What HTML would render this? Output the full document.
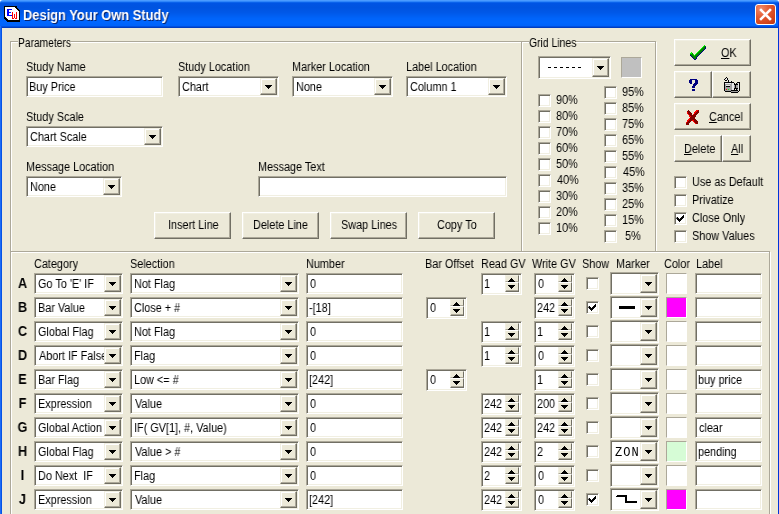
<!DOCTYPE html>
<html><head><meta charset="utf-8"><style>
html,body{margin:0;padding:0;width:779px;height:514px;overflow:hidden;background:#fff;position:relative}
div{position:absolute;box-sizing:border-box}
.t{will-change:transform;font:12px "Liberation Sans",sans-serif;line-height:14px;white-space:pre;color:#000;transform-origin:0 0}
.tt{will-change:transform;font:bold 14px "Liberation Sans",sans-serif;line-height:14px;white-space:pre;color:#fff;text-shadow:1px 1px 0 #0A246A;transform:scaleX(0.92);transform-origin:0 0}
.rl{will-change:transform;font:bold 14px "Liberation Sans",sans-serif;line-height:14px;width:21px;text-align:center;transform:scaleX(0.9)}
.q{font:bold 15px "Liberation Serif",serif;line-height:14px;color:#000080}
.mono{will-change:transform;font:12px "Liberation Mono",monospace;line-height:14px}
.sk{border:1px solid;border-color:#ACA899 #FFFFFF #FFFFFF #ACA899;box-shadow:inset 1px 1px 0 #716F64,inset -1px -1px 0 #F1EFE2}
.rb{background:#ECE9D8;border:1px solid;border-color:#FFFFFF #716F64 #716F64 #FFFFFF;box-shadow:inset -1px -1px 0 #ACA899,inset 1px 1px 0 #F1EFE2}
.sb{background:#ECE9D8;border:1px solid;border-color:#F1EFE2 #716F64 #716F64 #F1EFE2;box-shadow:inset -1px -1px 0 #ACA899,inset 1px 1px 0 #FFFFFF}
.ad{width:7px;height:4px;background:linear-gradient(#000,#000) 0 0/7px 1px no-repeat,linear-gradient(#000,#000) 1px 1px/5px 1px no-repeat,linear-gradient(#000,#000) 2px 2px/3px 1px no-repeat,linear-gradient(#000,#000) 3px 3px/1px 1px no-repeat}
.au{width:7px;height:4px;background:linear-gradient(#000,#000) 0 3px/7px 1px no-repeat,linear-gradient(#000,#000) 1px 2px/5px 1px no-repeat,linear-gradient(#000,#000) 2px 1px/3px 1px no-repeat,linear-gradient(#000,#000) 3px 0/1px 1px no-repeat}
.title{left:0;top:0;width:779px;height:28px;border-radius:3px 3px 0 0;background:linear-gradient(#4A9BFF 0.5px,#2F86FA 1.5px,#0A62EB 2.5px,#0054E3 3.5px,#0053E0 7.5px,#0058E8 12.5px,#0064FA 18.5px,#0066FF 22.5px,#0063FA 25.5px,#0050E0 26.5px,#003DC0 27.5px)}
</style></head><body>
<div class="title"></div>
<div style="left:0;top:28px;width:779px;height:486px;background:#ECE9D8"></div>
<div style="left:0px;top:26px;width:1px;height:488px;background:#1C6BF6"></div>
<div style="left:1px;top:26px;width:1px;height:488px;background:#0553E6"></div>
<div style="left:778px;top:3px;width:1px;height:511px;background:#0035DA"></div>
<div class="tt" style="left:23px;top:8px">Design Your Own Study</div>
<div style="left:755px;top:4px;width:21px;height:21px;box-sizing:border-box;border:1px solid #fff;border-radius:3px;background:radial-gradient(circle at 25% 20%, #F08A6A 0%, #E35B32 40%, #D2431A 75%, #B83310 100%)"></div>
<svg style="position:absolute;left:755px;top:4px" width="21" height="21"><path d="M6 6L15 15M15 6L6 15" stroke="#fff" stroke-width="2.6" stroke-linecap="square"/></svg>
<div style="left:10px;top:41px;width:512px;height:211px;box-sizing:border-box;border:1px solid #FFFFFF;transform:translate(1px,1px)"></div>
<div style="left:10px;top:41px;width:512px;height:211px;box-sizing:border-box;border:1px solid #ACA899"></div>
<div style="left:521px;top:41px;width:135px;height:211px;box-sizing:border-box;border:1px solid #FFFFFF;transform:translate(1px,1px)"></div>
<div style="left:521px;top:41px;width:135px;height:211px;box-sizing:border-box;border:1px solid #ACA899"></div>
<div style="left:10px;top:251px;width:760px;height:299px;box-sizing:border-box;border:1px solid #FFFFFF;transform:translate(1px,1px)"></div>
<div style="left:10px;top:251px;width:760px;height:299px;box-sizing:border-box;border:1px solid #ACA899"></div>
<div style="left:18px;top:38px;width:53px;height:9px;background:#ECE9D8"></div>
<div class="t" style="left:18.06px;top:36px;transform:scaleX(0.8547);">Parameters</div>
<div style="left:529px;top:38px;width:47px;height:9px;background:#ECE9D8"></div>
<div class="t" style="left:529.04px;top:36px;transform:scaleX(0.8665);">Grid Lines</div>
<div class="t" style="left:26.00px;top:60px;transform:scaleX(0.9050);">Study Name</div>
<div class="sk" style="left:26px;top:76px;width:137px;height:21px;background:#FFFFFF"></div>
<div class="t" style="left:29.00px;top:80px;transform:scaleX(0.9050);">Buy Price</div>
<div class="t" style="left:178.00px;top:60px;transform:scaleX(0.9050);">Study Location</div>
<div class="sk" style="left:178px;top:76px;width:101px;height:21px;background:#FFFFFF"></div>
<div class="sb" style="left:260px;top:78px;width:17px;height:17px"></div>
<div class="ad" style="left:265px;top:85px"></div>
<div style="left:180px;top:78px;width:80px;height:17px;overflow:hidden">
<div class="t" style="left:2.00px;top:2px;transform:scaleX(0.9050);">Chart</div>
</div>
<div class="t" style="left:292.00px;top:60px;transform:scaleX(0.9050);">Marker Location</div>
<div class="sk" style="left:292px;top:76px;width:101px;height:21px;background:#FFFFFF"></div>
<div class="sb" style="left:374px;top:78px;width:17px;height:17px"></div>
<div class="ad" style="left:379px;top:85px"></div>
<div style="left:294px;top:78px;width:80px;height:17px;overflow:hidden">
<div class="t" style="left:2.00px;top:2px;transform:scaleX(0.9050);">None</div>
</div>
<div class="t" style="left:406.00px;top:60px;transform:scaleX(0.9050);">Label Location</div>
<div class="sk" style="left:406px;top:76px;width:101px;height:21px;background:#FFFFFF"></div>
<div class="sb" style="left:488px;top:78px;width:17px;height:17px"></div>
<div class="ad" style="left:493px;top:85px"></div>
<div style="left:408px;top:78px;width:80px;height:17px;overflow:hidden">
<div class="t" style="left:2.00px;top:2px;transform:scaleX(0.9050);">Column 1</div>
</div>
<div class="t" style="left:26.00px;top:110px;transform:scaleX(0.9050);">Study Scale</div>
<div class="sk" style="left:26px;top:126px;width:137px;height:21px;background:#FFFFFF"></div>
<div class="sb" style="left:144px;top:128px;width:17px;height:17px"></div>
<div class="ad" style="left:149px;top:135px"></div>
<div style="left:28px;top:128px;width:116px;height:17px;overflow:hidden">
<div class="t" style="left:2.00px;top:2px;transform:scaleX(0.9050);">Chart Scale</div>
</div>
<div class="t" style="left:26.00px;top:160px;transform:scaleX(0.9050);">Message Location</div>
<div class="sk" style="left:26px;top:176px;width:96px;height:21px;background:#FFFFFF"></div>
<div class="sb" style="left:103px;top:178px;width:17px;height:17px"></div>
<div class="ad" style="left:108px;top:185px"></div>
<div style="left:28px;top:178px;width:75px;height:17px;overflow:hidden">
<div class="t" style="left:2.00px;top:2px;transform:scaleX(0.9050);">None</div>
</div>
<div class="t" style="left:258.00px;top:160px;transform:scaleX(0.9050);">Message Text</div>
<div class="sk" style="left:258px;top:176px;width:249px;height:21px;background:#FFFFFF"></div>
<div class="rb" style="left:154px;top:212px;width:77px;height:27px"></div>
<div class="t" style="left:167.50px;top:218px;transform:scaleX(0.9050);">Insert Line</div>
<div class="rb" style="left:242px;top:212px;width:77px;height:27px"></div>
<div class="t" style="left:253.00px;top:218px;transform:scaleX(0.9050);">Delete Line</div>
<div class="rb" style="left:330px;top:212px;width:77px;height:27px"></div>
<div class="t" style="left:340.50px;top:218px;transform:scaleX(0.9050);">Swap Lines</div>
<div class="rb" style="left:418px;top:212px;width:77px;height:27px"></div>
<div class="t" style="left:437.00px;top:218px;transform:scaleX(0.9050);">Copy To</div>
<div class="sk" style="left:538px;top:56px;width:73px;height:23px;background:#FFFFFF"></div>
<div class="sb" style="left:592px;top:58px;width:17px;height:19px"></div>
<div class="ad" style="left:597px;top:66px"></div>
<div style="left:548px;top:67px;width:3px;height:1px;background:#000"></div>
<div style="left:554px;top:67px;width:3px;height:1px;background:#000"></div>
<div style="left:560px;top:67px;width:3px;height:1px;background:#000"></div>
<div style="left:566px;top:67px;width:3px;height:1px;background:#000"></div>
<div style="left:572px;top:67px;width:3px;height:1px;background:#000"></div>
<div style="left:578px;top:67px;width:3px;height:1px;background:#000"></div>
<div style="left:621px;top:57px;width:21px;height:21px;box-sizing:border-box;border:1px solid;border-color:#ACA899 #FFFFFF #FFFFFF #ACA899;background:#C0C0C0"></div>
<div class="sk" style="left:538px;top:94px;width:13px;height:13px;background:#FFFFFF"></div>
<div class="t" style="left:556.00px;top:93px;transform:scaleX(0.9050);">90%</div>
<div class="sk" style="left:538px;top:110px;width:13px;height:13px;background:#FFFFFF"></div>
<div class="t" style="left:556.00px;top:109px;transform:scaleX(0.9050);">80%</div>
<div class="sk" style="left:538px;top:126px;width:13px;height:13px;background:#FFFFFF"></div>
<div class="t" style="left:556.00px;top:125px;transform:scaleX(0.9050);">70%</div>
<div class="sk" style="left:538px;top:142px;width:13px;height:13px;background:#FFFFFF"></div>
<div class="t" style="left:556.00px;top:141px;transform:scaleX(0.9050);">60%</div>
<div class="sk" style="left:538px;top:158px;width:13px;height:13px;background:#FFFFFF"></div>
<div class="t" style="left:556.00px;top:157px;transform:scaleX(0.9050);">50%</div>
<div class="sk" style="left:538px;top:174px;width:13px;height:13px;background:#FFFFFF"></div>
<div class="t" style="left:557.00px;top:173px;transform:scaleX(0.9050);">40%</div>
<div class="sk" style="left:538px;top:190px;width:13px;height:13px;background:#FFFFFF"></div>
<div class="t" style="left:556.00px;top:189px;transform:scaleX(0.9050);">30%</div>
<div class="sk" style="left:538px;top:206px;width:13px;height:13px;background:#FFFFFF"></div>
<div class="t" style="left:556.00px;top:205px;transform:scaleX(0.9050);">20%</div>
<div class="sk" style="left:538px;top:222px;width:13px;height:13px;background:#FFFFFF"></div>
<div class="t" style="left:556.00px;top:221px;transform:scaleX(0.9050);">10%</div>
<div class="sk" style="left:604px;top:86px;width:13px;height:13px;background:#FFFFFF"></div>
<div class="t" style="left:622.00px;top:85px;transform:scaleX(0.9050);">95%</div>
<div class="sk" style="left:604px;top:102px;width:13px;height:13px;background:#FFFFFF"></div>
<div class="t" style="left:622.00px;top:101px;transform:scaleX(0.9050);">85%</div>
<div class="sk" style="left:604px;top:118px;width:13px;height:13px;background:#FFFFFF"></div>
<div class="t" style="left:622.00px;top:117px;transform:scaleX(0.9050);">75%</div>
<div class="sk" style="left:604px;top:134px;width:13px;height:13px;background:#FFFFFF"></div>
<div class="t" style="left:622.00px;top:133px;transform:scaleX(0.9050);">65%</div>
<div class="sk" style="left:604px;top:150px;width:13px;height:13px;background:#FFFFFF"></div>
<div class="t" style="left:622.00px;top:149px;transform:scaleX(0.9050);">55%</div>
<div class="sk" style="left:604px;top:166px;width:13px;height:13px;background:#FFFFFF"></div>
<div class="t" style="left:622.50px;top:165px;transform:scaleX(0.9050);">45%</div>
<div class="sk" style="left:604px;top:182px;width:13px;height:13px;background:#FFFFFF"></div>
<div class="t" style="left:622.00px;top:181px;transform:scaleX(0.9050);">35%</div>
<div class="sk" style="left:604px;top:198px;width:13px;height:13px;background:#FFFFFF"></div>
<div class="t" style="left:622.00px;top:197px;transform:scaleX(0.9050);">25%</div>
<div class="sk" style="left:604px;top:214px;width:13px;height:13px;background:#FFFFFF"></div>
<div class="t" style="left:622.00px;top:213px;transform:scaleX(0.9050);">15%</div>
<div class="sk" style="left:604px;top:230px;width:13px;height:13px;background:#FFFFFF"></div>
<div class="t" style="left:625.00px;top:229px;transform:scaleX(0.9050);">5%</div>
<div class="rb" style="left:674px;top:39px;width:77px;height:27px"></div>
<div class="rb" style="left:674px;top:71px;width:38px;height:27px"></div>
<div class="rb" style="left:712px;top:71px;width:39px;height:27px"></div>
<div class="rb" style="left:674px;top:103px;width:77px;height:27px"></div>
<div class="rb" style="left:674px;top:135px;width:48px;height:27px"></div>
<div class="rb" style="left:722px;top:135px;width:29px;height:27px"></div>
<svg style="position:absolute;left:4px;top:6px" width="16" height="16" shape-rendering="crispEdges"><path d="M0 0h1v1h-1zM1 0h1v1h-1zM2 0h1v1h-1zM3 0h1v1h-1zM4 0h1v1h-1zM5 0h1v1h-1zM6 0h1v1h-1zM7 0h1v1h-1zM8 0h1v1h-1zM9 0h1v1h-1zM10 0h1v1h-1zM11 0h1v1h-1zM12 0h1v1h-1zM0 1h1v1h-1zM11 1h1v1h-1zM12 1h1v1h-1zM0 2h1v1h-1zM12 2h1v1h-1zM13 2h1v1h-1zM0 3h1v1h-1zM13 3h1v1h-1zM14 3h1v1h-1zM0 4h1v1h-1zM14 4h1v1h-1zM15 4h1v1h-1zM0 5h1v1h-1zM15 5h1v1h-1zM0 6h1v1h-1zM15 6h1v1h-1zM0 7h1v1h-1zM15 7h1v1h-1zM0 8h1v1h-1zM15 8h1v1h-1zM0 9h1v1h-1zM15 9h1v1h-1zM0 10h1v1h-1zM15 10h1v1h-1zM0 11h1v1h-1zM1 11h1v1h-1zM15 11h1v1h-1zM0 12h1v1h-1zM1 12h1v1h-1zM2 12h1v1h-1zM15 12h1v1h-1zM1 13h1v1h-1zM2 13h1v1h-1zM3 13h1v1h-1zM15 13h1v1h-1zM2 14h1v1h-1zM3 14h1v1h-1zM4 14h1v1h-1zM5 14h1v1h-1zM6 14h1v1h-1zM7 14h1v1h-1zM8 14h1v1h-1zM9 14h1v1h-1zM10 14h1v1h-1zM11 14h1v1h-1zM12 14h1v1h-1zM13 14h1v1h-1zM14 14h1v1h-1zM15 14h1v1h-1zM3 15h1v1h-1zM4 15h1v1h-1zM5 15h1v1h-1zM6 15h1v1h-1zM7 15h1v1h-1zM8 15h1v1h-1zM9 15h1v1h-1zM10 15h1v1h-1zM11 15h1v1h-1zM12 15h1v1h-1zM13 15h1v1h-1zM14 15h1v1h-1zM15 15h1v1h-1z" fill="#000000"/><path d="M1 1h1v1h-1zM2 1h1v1h-1zM3 1h1v1h-1zM4 1h1v1h-1zM5 1h1v1h-1zM6 1h1v1h-1zM7 1h1v1h-1zM8 1h1v1h-1zM9 1h1v1h-1zM10 1h1v1h-1zM1 2h1v1h-1zM2 2h1v1h-1zM3 2h1v1h-1zM4 2h1v1h-1zM5 2h1v1h-1zM6 2h1v1h-1zM7 2h1v1h-1zM8 2h1v1h-1zM9 2h1v1h-1zM10 2h1v1h-1zM11 2h1v1h-1zM1 3h1v1h-1zM2 3h1v1h-1zM8 3h1v1h-1zM9 3h1v1h-1zM10 3h1v1h-1zM11 3h1v1h-1zM12 3h1v1h-1zM1 4h1v1h-1zM2 4h1v1h-1zM5 4h1v1h-1zM6 4h1v1h-1zM7 4h1v1h-1zM8 4h1v1h-1zM9 4h1v1h-1zM10 4h1v1h-1zM11 4h1v1h-1zM12 4h1v1h-1zM13 4h1v1h-1zM1 5h1v1h-1zM2 5h1v1h-1zM5 5h1v1h-1zM6 5h1v1h-1zM7 5h1v1h-1zM8 5h1v1h-1zM9 5h1v1h-1zM10 5h1v1h-1zM11 5h1v1h-1zM12 5h1v1h-1zM13 5h1v1h-1zM14 5h1v1h-1zM1 6h1v1h-1zM2 6h1v1h-1zM7 6h1v1h-1zM9 6h1v1h-1zM10 6h1v1h-1zM11 6h1v1h-1zM13 6h1v1h-1zM14 6h1v1h-1zM1 7h1v1h-1zM2 7h1v1h-1zM5 7h1v1h-1zM6 7h1v1h-1zM7 7h1v1h-1zM9 7h1v1h-1zM10 7h1v1h-1zM11 7h1v1h-1zM13 7h1v1h-1zM14 7h1v1h-1zM1 8h1v1h-1zM2 8h1v1h-1zM5 8h1v1h-1zM6 8h1v1h-1zM7 8h1v1h-1zM9 8h1v1h-1zM11 8h1v1h-1zM13 8h1v1h-1zM14 8h1v1h-1zM1 9h1v1h-1zM2 9h1v1h-1zM9 9h1v1h-1zM11 9h1v1h-1zM13 9h1v1h-1zM14 9h1v1h-1zM1 10h1v1h-1zM2 10h1v1h-1zM3 10h1v1h-1zM4 10h1v1h-1zM5 10h1v1h-1zM6 10h1v1h-1zM7 10h1v1h-1zM9 10h1v1h-1zM11 10h1v1h-1zM13 10h1v1h-1zM14 10h1v1h-1zM2 11h1v1h-1zM3 11h1v1h-1zM4 11h1v1h-1zM5 11h1v1h-1zM6 11h1v1h-1zM7 11h1v1h-1zM9 11h1v1h-1zM11 11h1v1h-1zM13 11h1v1h-1zM14 11h1v1h-1zM3 12h1v1h-1zM4 12h1v1h-1zM5 12h1v1h-1zM6 12h1v1h-1zM7 12h1v1h-1zM10 12h1v1h-1zM13 12h1v1h-1zM14 12h1v1h-1zM4 13h1v1h-1zM5 13h1v1h-1zM6 13h1v1h-1zM7 13h1v1h-1zM8 13h1v1h-1zM9 13h1v1h-1zM10 13h1v1h-1zM11 13h1v1h-1zM12 13h1v1h-1zM13 13h1v1h-1zM14 13h1v1h-1z" fill="#FFFFFF"/><path d="M3 3h1v1h-1zM4 3h1v1h-1zM5 3h1v1h-1zM6 3h1v1h-1zM7 3h1v1h-1zM3 4h1v1h-1zM4 4h1v1h-1zM3 5h1v1h-1zM4 5h1v1h-1zM3 6h1v1h-1zM4 6h1v1h-1zM5 6h1v1h-1zM6 6h1v1h-1zM3 7h1v1h-1zM4 7h1v1h-1zM3 8h1v1h-1zM4 8h1v1h-1zM3 9h1v1h-1zM4 9h1v1h-1zM5 9h1v1h-1zM6 9h1v1h-1zM7 9h1v1h-1z" fill="#0000FF"/><path d="M8 6h1v1h-1zM12 6h1v1h-1zM8 7h1v1h-1zM12 7h1v1h-1zM8 8h1v1h-1zM10 8h1v1h-1zM12 8h1v1h-1zM8 9h1v1h-1zM10 9h1v1h-1zM12 9h1v1h-1zM8 10h1v1h-1zM10 10h1v1h-1zM12 10h1v1h-1zM8 11h1v1h-1zM10 11h1v1h-1zM12 11h1v1h-1zM8 12h1v1h-1zM9 12h1v1h-1zM11 12h1v1h-1zM12 12h1v1h-1z" fill="#FF0000"/></svg>
<svg style="position:absolute;left:689px;top:45px" width="18" height="15" shape-rendering="crispEdges"><path d="M15 0h1v1h-1zM14 1h1v1h-1zM13 2h1v1h-1zM12 3h1v1h-1zM11 4h1v1h-1zM10 5h1v1h-1zM9 6h1v1h-1zM2 7h1v1h-1zM8 7h1v1h-1zM1 8h1v1h-1zM2 8h1v1h-1zM7 8h1v1h-1zM4 9h1v1h-1zM6 9h1v1h-1zM5 10h1v1h-1z" fill="#00FF00"/><path d="M15 1h1v1h-1zM16 1h1v1h-1zM14 2h1v1h-1zM15 2h1v1h-1zM13 3h1v1h-1zM14 3h1v1h-1zM15 3h1v1h-1zM12 4h1v1h-1zM13 4h1v1h-1zM14 4h1v1h-1zM11 5h1v1h-1zM12 5h1v1h-1zM13 5h1v1h-1zM10 6h1v1h-1zM11 6h1v1h-1zM12 6h1v1h-1zM9 7h1v1h-1zM10 7h1v1h-1zM11 7h1v1h-1zM3 8h1v1h-1zM8 8h1v1h-1zM9 8h1v1h-1zM10 8h1v1h-1zM1 9h1v1h-1zM2 9h1v1h-1zM3 9h1v1h-1zM7 9h1v1h-1zM8 9h1v1h-1zM9 9h1v1h-1zM2 10h1v1h-1zM3 10h1v1h-1zM4 10h1v1h-1zM6 10h1v1h-1zM7 10h1v1h-1zM8 10h1v1h-1zM3 11h1v1h-1zM4 11h1v1h-1zM5 11h1v1h-1zM6 11h1v1h-1zM7 11h1v1h-1zM4 12h1v1h-1zM5 12h1v1h-1zM6 12h1v1h-1zM5 13h1v1h-1zM6 13h1v1h-1z" fill="#008000"/><path d="M16 2h1v1h-1zM16 3h1v1h-1zM15 4h1v1h-1zM14 5h1v1h-1zM13 6h1v1h-1zM12 7h1v1h-1zM11 8h1v1h-1zM10 9h1v1h-1zM1 10h1v1h-1zM9 10h1v1h-1zM2 11h1v1h-1zM8 11h1v1h-1zM3 12h1v1h-1zM7 12h1v1h-1zM4 13h1v1h-1zM7 13h1v1h-1zM5 14h1v1h-1zM6 14h1v1h-1z" fill="#000080"/></svg>
<div class="t" style="left:721.00px;top:46px;transform:scaleX(0.9050);"><u>O</u>K</div>
<svg style="position:absolute;left:689px;top:79px" width="9" height="12" shape-rendering="crispEdges"><path d="M1 0h1v1h-1zM2 0h1v1h-1zM3 0h1v1h-1zM4 0h1v1h-1zM5 0h1v1h-1zM6 0h1v1h-1zM7 0h1v1h-1zM0 1h1v1h-1zM1 1h1v1h-1zM2 1h1v1h-1zM6 1h1v1h-1zM7 1h1v1h-1zM8 1h1v1h-1zM0 2h1v1h-1zM1 2h1v1h-1zM2 2h1v1h-1zM6 2h1v1h-1zM7 2h1v1h-1zM8 2h1v1h-1zM0 3h1v1h-1zM1 3h1v1h-1zM2 3h1v1h-1zM6 3h1v1h-1zM7 3h1v1h-1zM8 3h1v1h-1zM1 4h1v1h-1zM2 4h1v1h-1zM5 4h1v1h-1zM6 4h1v1h-1zM7 4h1v1h-1zM8 4h1v1h-1zM4 5h1v1h-1zM5 5h1v1h-1zM6 5h1v1h-1zM7 5h1v1h-1zM4 6h1v1h-1zM5 6h1v1h-1zM6 6h1v1h-1zM3 7h1v1h-1zM4 7h1v1h-1zM5 7h1v1h-1zM3 8h1v1h-1zM4 8h1v1h-1zM5 8h1v1h-1zM3 10h1v1h-1zM4 10h1v1h-1zM5 10h1v1h-1zM3 11h1v1h-1zM4 11h1v1h-1zM5 11h1v1h-1z" fill="#000080"/></svg>
<svg style="position:absolute;left:723px;top:76px" width="17" height="17" shape-rendering="crispEdges"><path d="M3 1h1v1h-1zM2 2h1v1h-1zM4 2h1v1h-1zM1 3h1v1h-1zM4 3h1v1h-1zM2 4h1v1h-1zM3 4h1v1h-1zM5 4h1v1h-1zM5 5h1v1h-1zM8 5h1v1h-1zM1 6h1v1h-1zM2 6h1v1h-1zM3 6h1v1h-1zM4 6h1v1h-1zM5 6h1v1h-1zM6 6h1v1h-1zM7 6h1v1h-1zM8 6h1v1h-1zM9 6h1v1h-1zM10 6h1v1h-1zM14 6h1v1h-1zM15 6h1v1h-1zM16 6h1v1h-1zM1 7h1v1h-1zM11 7h1v1h-1zM13 7h1v1h-1zM16 7h1v1h-1zM1 8h1v1h-1zM11 8h1v1h-1zM12 8h1v1h-1zM13 8h1v1h-1zM14 8h1v1h-1zM16 8h1v1h-1zM1 9h1v1h-1zM12 9h1v1h-1zM16 9h1v1h-1zM1 10h1v1h-1zM3 10h1v1h-1zM4 10h1v1h-1zM5 10h1v1h-1zM6 10h1v1h-1zM12 10h1v1h-1zM16 10h1v1h-1zM1 11h1v1h-1zM12 11h1v1h-1zM16 11h1v1h-1zM1 12h1v1h-1zM11 12h1v1h-1zM12 12h1v1h-1zM13 12h1v1h-1zM14 12h1v1h-1zM16 12h1v1h-1zM1 13h1v1h-1zM11 13h1v1h-1zM13 13h1v1h-1zM16 13h1v1h-1zM1 14h1v1h-1zM8 14h1v1h-1zM9 14h1v1h-1zM10 14h1v1h-1zM11 14h1v1h-1zM12 14h1v1h-1zM13 14h1v1h-1zM14 14h1v1h-1zM16 14h1v1h-1zM2 15h1v1h-1zM3 15h1v1h-1zM4 15h1v1h-1zM5 15h1v1h-1zM6 15h1v1h-1zM7 15h1v1h-1zM15 15h1v1h-1zM8 16h1v1h-1zM9 16h1v1h-1zM10 16h1v1h-1zM11 16h1v1h-1zM12 16h1v1h-1zM13 16h1v1h-1zM14 16h1v1h-1z" fill="#000000"/><path d="M3 2h1v1h-1zM2 3h1v1h-1zM3 3h1v1h-1zM5 3h1v1h-1zM6 4h1v1h-1zM6 5h1v1h-1zM7 5h1v1h-1zM2 7h1v1h-1zM3 7h1v1h-1zM4 7h1v1h-1zM5 7h1v1h-1zM6 7h1v1h-1zM7 7h1v1h-1zM9 7h1v1h-1zM10 7h1v1h-1zM15 7h1v1h-1zM9 8h1v1h-1zM10 8h1v1h-1zM15 8h1v1h-1zM3 9h1v1h-1zM4 9h1v1h-1zM5 9h1v1h-1zM6 9h1v1h-1zM9 9h1v1h-1zM10 9h1v1h-1zM15 9h1v1h-1zM9 10h1v1h-1zM10 10h1v1h-1zM15 10h1v1h-1zM9 11h1v1h-1zM10 11h1v1h-1zM15 11h1v1h-1zM9 12h1v1h-1zM10 12h1v1h-1zM15 12h1v1h-1zM9 13h1v1h-1zM10 13h1v1h-1zM15 13h1v1h-1z" fill="#E8E8E8"/><path d="M8 7h1v1h-1zM14 7h1v1h-1zM2 8h1v1h-1zM3 8h1v1h-1zM4 8h1v1h-1zM5 8h1v1h-1zM6 8h1v1h-1zM7 8h1v1h-1zM8 8h1v1h-1zM2 9h1v1h-1zM7 9h1v1h-1zM8 9h1v1h-1zM11 9h1v1h-1zM13 9h1v1h-1zM14 9h1v1h-1zM2 10h1v1h-1zM7 10h1v1h-1zM8 10h1v1h-1zM11 10h1v1h-1zM13 10h1v1h-1zM14 10h1v1h-1zM2 11h1v1h-1zM3 11h1v1h-1zM4 11h1v1h-1zM5 11h1v1h-1zM6 11h1v1h-1zM7 11h1v1h-1zM8 11h1v1h-1zM11 11h1v1h-1zM13 11h1v1h-1zM14 11h1v1h-1zM2 12h1v1h-1zM3 12h1v1h-1zM4 12h1v1h-1zM5 12h1v1h-1zM6 12h1v1h-1zM7 12h1v1h-1zM8 12h1v1h-1zM2 13h1v1h-1zM4 13h1v1h-1zM6 13h1v1h-1zM7 13h1v1h-1zM8 13h1v1h-1zM14 13h1v1h-1zM2 14h1v1h-1zM3 14h1v1h-1zM4 14h1v1h-1zM5 14h1v1h-1zM6 14h1v1h-1zM7 14h1v1h-1zM8 15h1v1h-1zM9 15h1v1h-1zM10 15h1v1h-1zM11 15h1v1h-1zM12 15h1v1h-1zM13 15h1v1h-1zM14 15h1v1h-1z" fill="#A0A0A0"/><path d="M3 13h1v1h-1z" fill="#FF0000"/><path d="M5 13h1v1h-1z" fill="#00FF00"/></svg>
<svg style="position:absolute;left:684px;top:108px" width="18" height="18" shape-rendering="crispEdges"><path d="M4 2h1v1h-1zM14 2h1v1h-1zM3 3h1v1h-1zM4 3h1v1h-1zM5 3h1v1h-1zM13 3h1v1h-1zM14 3h1v1h-1zM4 4h1v1h-1zM5 4h1v1h-1zM6 4h1v1h-1zM12 4h1v1h-1zM13 4h1v1h-1zM14 4h1v1h-1zM4 5h1v1h-1zM5 5h1v1h-1zM6 5h1v1h-1zM7 5h1v1h-1zM11 5h1v1h-1zM12 5h1v1h-1zM13 5h1v1h-1zM5 6h1v1h-1zM6 6h1v1h-1zM7 6h1v1h-1zM10 6h1v1h-1zM11 6h1v1h-1zM12 6h1v1h-1zM6 7h1v1h-1zM7 7h1v1h-1zM8 7h1v1h-1zM9 7h1v1h-1zM10 7h1v1h-1zM11 7h1v1h-1zM7 8h1v1h-1zM8 8h1v1h-1zM9 8h1v1h-1zM10 8h1v1h-1zM11 8h1v1h-1zM6 9h1v1h-1zM7 9h1v1h-1zM8 9h1v1h-1zM9 9h1v1h-1zM10 9h1v1h-1zM6 10h1v1h-1zM7 10h1v1h-1zM8 10h1v1h-1zM9 10h1v1h-1zM10 10h1v1h-1zM6 11h1v1h-1zM7 11h1v1h-1zM8 11h1v1h-1zM9 11h1v1h-1zM10 11h1v1h-1zM11 11h1v1h-1zM5 12h1v1h-1zM6 12h1v1h-1zM7 12h1v1h-1zM10 12h1v1h-1zM11 12h1v1h-1zM12 12h1v1h-1zM4 13h1v1h-1zM5 13h1v1h-1zM6 13h1v1h-1zM10 13h1v1h-1zM11 13h1v1h-1zM12 13h1v1h-1zM13 13h1v1h-1zM3 14h1v1h-1zM4 14h1v1h-1zM5 14h1v1h-1zM11 14h1v1h-1zM12 14h1v1h-1zM13 14h1v1h-1zM2 15h1v1h-1zM3 15h1v1h-1zM4 15h1v1h-1zM12 15h1v1h-1zM13 15h1v1h-1zM2 16h1v1h-1zM3 16h1v1h-1zM4 16h1v1h-1z" fill="#800000"/><path d="M12 2h1v1h-1zM13 2h1v1h-1zM11 3h1v1h-1zM12 3h1v1h-1zM3 4h1v1h-1zM10 4h1v1h-1zM11 4h1v1h-1zM3 5h1v1h-1zM10 5h1v1h-1zM4 6h1v1h-1zM9 6h1v1h-1zM5 7h1v1h-1zM5 8h1v1h-1zM6 8h1v1h-1zM5 10h1v1h-1zM4 11h1v1h-1zM5 11h1v1h-1zM3 12h1v1h-1zM4 12h1v1h-1zM8 12h1v1h-1zM9 12h1v1h-1zM3 13h1v1h-1zM9 13h1v1h-1zM2 14h1v1h-1zM10 14h1v1h-1zM11 15h1v1h-1z" fill="#FF0000"/></svg>
<div class="t" style="left:709.00px;top:110px;transform:scaleX(0.9050);"><u>C</u>ancel</div>
<div class="t" style="left:684.00px;top:142px;transform:scaleX(0.9050);"><u>D</u>elete</div>
<div class="t" style="left:731.00px;top:142px;transform:scaleX(0.9050);"><u>A</u>ll</div>
<div class="sk" style="left:674px;top:176px;width:13px;height:13px;background:#FFFFFF"></div>
<div class="t" style="left:692.00px;top:175px;transform:scaleX(0.9050);">Use as Default</div>
<div class="sk" style="left:674px;top:194px;width:13px;height:13px;background:#FFFFFF"></div>
<div class="t" style="left:692.00px;top:193px;transform:scaleX(0.9050);">Privatize</div>
<div class="sk" style="left:674px;top:212px;width:13px;height:13px;background:#FFFFFF"></div>
<svg style="position:absolute;left:674px;top:212px" width="13" height="13"><path d="M3 5h1v1h1v1h1v-1h1v-1h1v-1h1v-1h1v3h-1v1h-1v1h-1v1h-1v1h-1v-1h-1v-1h-1v-1h-1z" fill="#000"/></svg>
<div class="t" style="left:692.00px;top:211px;transform:scaleX(0.9050);">Close Only</div>
<div class="sk" style="left:674px;top:230px;width:13px;height:13px;background:#FFFFFF"></div>
<div class="t" style="left:692.00px;top:229px;transform:scaleX(0.9050);">Show Values</div>
<div class="t" style="left:34.00px;top:257px;transform:scaleX(0.9050);">Category</div>
<div class="t" style="left:130.00px;top:257px;transform:scaleX(0.9050);">Selection</div>
<div class="t" style="left:306.00px;top:257px;transform:scaleX(0.9050);">Number</div>
<div class="t" style="left:425.00px;top:257px;transform:scaleX(0.9050);">Bar Offset</div>
<div class="t" style="left:481.00px;top:257px;transform:scaleX(0.9050);">Read GV</div>
<div class="t" style="left:532.00px;top:257px;transform:scaleX(0.9050);">Write GV</div>
<div class="t" style="left:582.00px;top:257px;transform:scaleX(0.9050);">Show</div>
<div class="t" style="left:616.00px;top:257px;transform:scaleX(0.9050);">Marker</div>
<div class="t" style="left:664.00px;top:257px;transform:scaleX(0.9050);">Color</div>
<div class="t" style="left:696.00px;top:257px;transform:scaleX(0.9050);">Label</div>
<div class="rl" style="left:12px;top:276px">A</div>
<div class="sk" style="left:34px;top:273px;width:89px;height:21px;background:#FFFFFF"></div>
<div class="sb" style="left:104px;top:275px;width:17px;height:17px"></div>
<div class="ad" style="left:109px;top:282px"></div>
<div style="left:36px;top:275px;width:68px;height:17px;overflow:hidden">
<div class="t" style="left:2.00px;top:2px;transform:scaleX(0.9050);">Go To 'E' IF</div>
</div>
<div class="sk" style="left:130px;top:273px;width:169px;height:21px;background:#FFFFFF"></div>
<div class="sb" style="left:280px;top:275px;width:17px;height:17px"></div>
<div class="ad" style="left:285px;top:282px"></div>
<div style="left:132px;top:275px;width:148px;height:17px;overflow:hidden">
<div class="t" style="left:2.00px;top:2px;transform:scaleX(0.9050);">Not Flag</div>
</div>
<div class="sk" style="left:306px;top:273px;width:97px;height:21px;background:#FFFFFF"></div>
<div class="t" style="left:310.00px;top:277px;transform:scaleX(0.9050);">0</div>
<div class="sk" style="left:481px;top:273px;width:41px;height:22px;background:#FFFFFF"></div>
<div style="left:505px;top:275px;width:14px;height:7px;background:#ECE9D8;box-sizing:border-box;border-style:solid;border-width:1px 1px 1px 1px;border-color:#F1EFE2 #716F64 #ACA899 #F1EFE2;"></div>
<div style="left:505px;top:282px;width:14px;height:10px;background:#ECE9D8;box-sizing:border-box;border-style:solid;border-width:1px 1px 1px 1px;border-color:#FFFFFF #716F64 #716F64 #F1EFE2;box-shadow:inset 0 -1px 0 #ACA899"></div>
<div class="au" style="left:508px;top:278px"></div>
<div class="ad" style="left:508px;top:285px"></div>
<div class="t" style="left:484.00px;top:277px;transform:scaleX(0.9050);">1</div>
<div class="sk" style="left:534px;top:273px;width:41px;height:22px;background:#FFFFFF"></div>
<div style="left:558px;top:275px;width:14px;height:7px;background:#ECE9D8;box-sizing:border-box;border-style:solid;border-width:1px 1px 1px 1px;border-color:#F1EFE2 #716F64 #ACA899 #F1EFE2;"></div>
<div style="left:558px;top:282px;width:14px;height:10px;background:#ECE9D8;box-sizing:border-box;border-style:solid;border-width:1px 1px 1px 1px;border-color:#FFFFFF #716F64 #716F64 #F1EFE2;box-shadow:inset 0 -1px 0 #ACA899"></div>
<div class="au" style="left:561px;top:278px"></div>
<div class="ad" style="left:561px;top:285px"></div>
<div class="t" style="left:538.00px;top:277px;transform:scaleX(0.9050);">0</div>
<div class="sk" style="left:586px;top:277px;width:13px;height:13px;background:#FFFFFF"></div>
<div class="sk" style="left:610px;top:272px;width:49px;height:23px;background:#FFFFFF"></div>
<div class="sb" style="left:640px;top:274px;width:17px;height:19px"></div>
<div class="ad" style="left:645px;top:282px"></div>
<div style="left:666px;top:273px;width:21px;height:21px;box-sizing:border-box;border:1px solid;border-color:#ACA899 #FFFFFF #FFFFFF #ACA899;background:#fff"></div>
<div class="sk" style="left:695px;top:273px;width:67px;height:21px;background:#FFFFFF"></div>
<div class="rl" style="left:12px;top:300px">B</div>
<div class="sk" style="left:34px;top:297px;width:89px;height:21px;background:#FFFFFF"></div>
<div class="sb" style="left:104px;top:299px;width:17px;height:17px"></div>
<div class="ad" style="left:109px;top:306px"></div>
<div style="left:36px;top:299px;width:68px;height:17px;overflow:hidden">
<div class="t" style="left:2.00px;top:2px;transform:scaleX(0.9050);">Bar Value</div>
</div>
<div class="sk" style="left:130px;top:297px;width:169px;height:21px;background:#FFFFFF"></div>
<div class="sb" style="left:280px;top:299px;width:17px;height:17px"></div>
<div class="ad" style="left:285px;top:306px"></div>
<div style="left:132px;top:299px;width:148px;height:17px;overflow:hidden">
<div class="t" style="left:2.00px;top:2px;transform:scaleX(0.9050);">Close + #</div>
</div>
<div class="sk" style="left:306px;top:297px;width:97px;height:21px;background:#FFFFFF"></div>
<div class="t" style="left:309.00px;top:301px;transform:scaleX(0.9050);">-[18]</div>
<div class="sk" style="left:426px;top:297px;width:41px;height:22px;background:#FFFFFF"></div>
<div style="left:450px;top:299px;width:14px;height:7px;background:#ECE9D8;box-sizing:border-box;border-style:solid;border-width:1px 1px 1px 1px;border-color:#F1EFE2 #716F64 #ACA899 #F1EFE2;"></div>
<div style="left:450px;top:306px;width:14px;height:10px;background:#ECE9D8;box-sizing:border-box;border-style:solid;border-width:1px 1px 1px 1px;border-color:#FFFFFF #716F64 #716F64 #F1EFE2;box-shadow:inset 0 -1px 0 #ACA899"></div>
<div class="au" style="left:453px;top:302px"></div>
<div class="ad" style="left:453px;top:309px"></div>
<div class="t" style="left:430.00px;top:301px;transform:scaleX(0.9050);">0</div>
<div class="sk" style="left:534px;top:297px;width:41px;height:22px;background:#FFFFFF"></div>
<div style="left:558px;top:299px;width:14px;height:7px;background:#ECE9D8;box-sizing:border-box;border-style:solid;border-width:1px 1px 1px 1px;border-color:#F1EFE2 #716F64 #ACA899 #F1EFE2;"></div>
<div style="left:558px;top:306px;width:14px;height:10px;background:#ECE9D8;box-sizing:border-box;border-style:solid;border-width:1px 1px 1px 1px;border-color:#FFFFFF #716F64 #716F64 #F1EFE2;box-shadow:inset 0 -1px 0 #ACA899"></div>
<div class="au" style="left:561px;top:302px"></div>
<div class="ad" style="left:561px;top:309px"></div>
<div class="t" style="left:537.00px;top:301px;transform:scaleX(0.9050);">242</div>
<div class="sk" style="left:586px;top:301px;width:13px;height:13px;background:#FFFFFF"></div>
<svg style="position:absolute;left:586px;top:301px" width="13" height="13"><path d="M3 5h1v1h1v1h1v-1h1v-1h1v-1h1v-1h1v3h-1v1h-1v1h-1v1h-1v1h-1v-1h-1v-1h-1v-1h-1z" fill="#000"/></svg>
<div class="sk" style="left:610px;top:296px;width:49px;height:23px;background:#FFFFFF"></div>
<div class="sb" style="left:640px;top:298px;width:17px;height:19px"></div>
<div class="ad" style="left:645px;top:306px"></div>
<div style="left:619px;top:306px;width:16px;height:3px;background:#000"></div>
<div style="left:666px;top:297px;width:21px;height:21px;box-sizing:border-box;border:1px solid;border-color:#ACA899 #FFFFFF #FFFFFF #ACA899;background:#FF00FF"></div>
<div class="sk" style="left:695px;top:297px;width:67px;height:21px;background:#FFFFFF"></div>
<div class="rl" style="left:12px;top:324px">C</div>
<div class="sk" style="left:34px;top:321px;width:89px;height:21px;background:#FFFFFF"></div>
<div class="sb" style="left:104px;top:323px;width:17px;height:17px"></div>
<div class="ad" style="left:109px;top:330px"></div>
<div style="left:36px;top:323px;width:68px;height:17px;overflow:hidden">
<div class="t" style="left:2.00px;top:2px;transform:scaleX(0.9050);">Global Flag</div>
</div>
<div class="sk" style="left:130px;top:321px;width:169px;height:21px;background:#FFFFFF"></div>
<div class="sb" style="left:280px;top:323px;width:17px;height:17px"></div>
<div class="ad" style="left:285px;top:330px"></div>
<div style="left:132px;top:323px;width:148px;height:17px;overflow:hidden">
<div class="t" style="left:2.00px;top:2px;transform:scaleX(0.9050);">Not Flag</div>
</div>
<div class="sk" style="left:306px;top:321px;width:97px;height:21px;background:#FFFFFF"></div>
<div class="t" style="left:310.00px;top:325px;transform:scaleX(0.9050);">0</div>
<div class="sk" style="left:481px;top:321px;width:41px;height:22px;background:#FFFFFF"></div>
<div style="left:505px;top:323px;width:14px;height:7px;background:#ECE9D8;box-sizing:border-box;border-style:solid;border-width:1px 1px 1px 1px;border-color:#F1EFE2 #716F64 #ACA899 #F1EFE2;"></div>
<div style="left:505px;top:330px;width:14px;height:10px;background:#ECE9D8;box-sizing:border-box;border-style:solid;border-width:1px 1px 1px 1px;border-color:#FFFFFF #716F64 #716F64 #F1EFE2;box-shadow:inset 0 -1px 0 #ACA899"></div>
<div class="au" style="left:508px;top:326px"></div>
<div class="ad" style="left:508px;top:333px"></div>
<div class="t" style="left:484.00px;top:325px;transform:scaleX(0.9050);">1</div>
<div class="sk" style="left:534px;top:321px;width:41px;height:22px;background:#FFFFFF"></div>
<div style="left:558px;top:323px;width:14px;height:7px;background:#ECE9D8;box-sizing:border-box;border-style:solid;border-width:1px 1px 1px 1px;border-color:#F1EFE2 #716F64 #ACA899 #F1EFE2;"></div>
<div style="left:558px;top:330px;width:14px;height:10px;background:#ECE9D8;box-sizing:border-box;border-style:solid;border-width:1px 1px 1px 1px;border-color:#FFFFFF #716F64 #716F64 #F1EFE2;box-shadow:inset 0 -1px 0 #ACA899"></div>
<div class="au" style="left:561px;top:326px"></div>
<div class="ad" style="left:561px;top:333px"></div>
<div class="t" style="left:537.00px;top:325px;transform:scaleX(0.9050);">1</div>
<div class="sk" style="left:586px;top:325px;width:13px;height:13px;background:#FFFFFF"></div>
<div class="sk" style="left:610px;top:320px;width:49px;height:23px;background:#FFFFFF"></div>
<div class="sb" style="left:640px;top:322px;width:17px;height:19px"></div>
<div class="ad" style="left:645px;top:330px"></div>
<div style="left:666px;top:321px;width:21px;height:21px;box-sizing:border-box;border:1px solid;border-color:#ACA899 #FFFFFF #FFFFFF #ACA899;background:#fff"></div>
<div class="sk" style="left:695px;top:321px;width:67px;height:21px;background:#FFFFFF"></div>
<div class="rl" style="left:12px;top:348px">D</div>
<div class="sk" style="left:34px;top:345px;width:89px;height:21px;background:#FFFFFF"></div>
<div class="sb" style="left:104px;top:347px;width:17px;height:17px"></div>
<div class="ad" style="left:109px;top:354px"></div>
<div style="left:36px;top:347px;width:68px;height:17px;overflow:hidden">
<div class="t" style="left:3.00px;top:2px;transform:scaleX(0.9050);">Abort IF False</div>
</div>
<div class="sk" style="left:130px;top:345px;width:169px;height:21px;background:#FFFFFF"></div>
<div class="sb" style="left:280px;top:347px;width:17px;height:17px"></div>
<div class="ad" style="left:285px;top:354px"></div>
<div style="left:132px;top:347px;width:148px;height:17px;overflow:hidden">
<div class="t" style="left:2.00px;top:2px;transform:scaleX(0.9050);">Flag</div>
</div>
<div class="sk" style="left:306px;top:345px;width:97px;height:21px;background:#FFFFFF"></div>
<div class="t" style="left:310.00px;top:349px;transform:scaleX(0.9050);">0</div>
<div class="sk" style="left:481px;top:345px;width:41px;height:22px;background:#FFFFFF"></div>
<div style="left:505px;top:347px;width:14px;height:7px;background:#ECE9D8;box-sizing:border-box;border-style:solid;border-width:1px 1px 1px 1px;border-color:#F1EFE2 #716F64 #ACA899 #F1EFE2;"></div>
<div style="left:505px;top:354px;width:14px;height:10px;background:#ECE9D8;box-sizing:border-box;border-style:solid;border-width:1px 1px 1px 1px;border-color:#FFFFFF #716F64 #716F64 #F1EFE2;box-shadow:inset 0 -1px 0 #ACA899"></div>
<div class="au" style="left:508px;top:350px"></div>
<div class="ad" style="left:508px;top:357px"></div>
<div class="t" style="left:484.00px;top:349px;transform:scaleX(0.9050);">1</div>
<div class="sk" style="left:534px;top:345px;width:41px;height:22px;background:#FFFFFF"></div>
<div style="left:558px;top:347px;width:14px;height:7px;background:#ECE9D8;box-sizing:border-box;border-style:solid;border-width:1px 1px 1px 1px;border-color:#F1EFE2 #716F64 #ACA899 #F1EFE2;"></div>
<div style="left:558px;top:354px;width:14px;height:10px;background:#ECE9D8;box-sizing:border-box;border-style:solid;border-width:1px 1px 1px 1px;border-color:#FFFFFF #716F64 #716F64 #F1EFE2;box-shadow:inset 0 -1px 0 #ACA899"></div>
<div class="au" style="left:561px;top:350px"></div>
<div class="ad" style="left:561px;top:357px"></div>
<div class="t" style="left:538.00px;top:349px;transform:scaleX(0.9050);">0</div>
<div class="sk" style="left:586px;top:349px;width:13px;height:13px;background:#FFFFFF"></div>
<div class="sk" style="left:610px;top:344px;width:49px;height:23px;background:#FFFFFF"></div>
<div class="sb" style="left:640px;top:346px;width:17px;height:19px"></div>
<div class="ad" style="left:645px;top:354px"></div>
<div style="left:666px;top:345px;width:21px;height:21px;box-sizing:border-box;border:1px solid;border-color:#ACA899 #FFFFFF #FFFFFF #ACA899;background:#fff"></div>
<div class="sk" style="left:695px;top:345px;width:67px;height:21px;background:#FFFFFF"></div>
<div class="rl" style="left:12px;top:372px">E</div>
<div class="sk" style="left:34px;top:369px;width:89px;height:21px;background:#FFFFFF"></div>
<div class="sb" style="left:104px;top:371px;width:17px;height:17px"></div>
<div class="ad" style="left:109px;top:378px"></div>
<div style="left:36px;top:371px;width:68px;height:17px;overflow:hidden">
<div class="t" style="left:2.00px;top:2px;transform:scaleX(0.9050);">Bar Flag</div>
</div>
<div class="sk" style="left:130px;top:369px;width:169px;height:21px;background:#FFFFFF"></div>
<div class="sb" style="left:280px;top:371px;width:17px;height:17px"></div>
<div class="ad" style="left:285px;top:378px"></div>
<div style="left:132px;top:371px;width:148px;height:17px;overflow:hidden">
<div class="t" style="left:2.00px;top:2px;transform:scaleX(0.9050);">Low &lt;= #</div>
</div>
<div class="sk" style="left:306px;top:369px;width:97px;height:21px;background:#FFFFFF"></div>
<div class="t" style="left:309.00px;top:373px;transform:scaleX(0.9050);">[242]</div>
<div class="sk" style="left:426px;top:369px;width:41px;height:22px;background:#FFFFFF"></div>
<div style="left:450px;top:371px;width:14px;height:7px;background:#ECE9D8;box-sizing:border-box;border-style:solid;border-width:1px 1px 1px 1px;border-color:#F1EFE2 #716F64 #ACA899 #F1EFE2;"></div>
<div style="left:450px;top:378px;width:14px;height:10px;background:#ECE9D8;box-sizing:border-box;border-style:solid;border-width:1px 1px 1px 1px;border-color:#FFFFFF #716F64 #716F64 #F1EFE2;box-shadow:inset 0 -1px 0 #ACA899"></div>
<div class="au" style="left:453px;top:374px"></div>
<div class="ad" style="left:453px;top:381px"></div>
<div class="t" style="left:430.00px;top:373px;transform:scaleX(0.9050);">0</div>
<div class="sk" style="left:534px;top:369px;width:41px;height:22px;background:#FFFFFF"></div>
<div style="left:558px;top:371px;width:14px;height:7px;background:#ECE9D8;box-sizing:border-box;border-style:solid;border-width:1px 1px 1px 1px;border-color:#F1EFE2 #716F64 #ACA899 #F1EFE2;"></div>
<div style="left:558px;top:378px;width:14px;height:10px;background:#ECE9D8;box-sizing:border-box;border-style:solid;border-width:1px 1px 1px 1px;border-color:#FFFFFF #716F64 #716F64 #F1EFE2;box-shadow:inset 0 -1px 0 #ACA899"></div>
<div class="au" style="left:561px;top:374px"></div>
<div class="ad" style="left:561px;top:381px"></div>
<div class="t" style="left:537.00px;top:373px;transform:scaleX(0.9050);">1</div>
<div class="sk" style="left:586px;top:373px;width:13px;height:13px;background:#FFFFFF"></div>
<div class="sk" style="left:610px;top:368px;width:49px;height:23px;background:#FFFFFF"></div>
<div class="sb" style="left:640px;top:370px;width:17px;height:19px"></div>
<div class="ad" style="left:645px;top:378px"></div>
<div style="left:666px;top:369px;width:21px;height:21px;box-sizing:border-box;border:1px solid;border-color:#ACA899 #FFFFFF #FFFFFF #ACA899;background:#fff"></div>
<div class="sk" style="left:695px;top:369px;width:67px;height:21px;background:#FFFFFF"></div>
<div class="t" style="left:698.00px;top:373px;transform:scaleX(0.9050);">buy price</div>
<div class="rl" style="left:12px;top:396px">F</div>
<div class="sk" style="left:34px;top:393px;width:89px;height:21px;background:#FFFFFF"></div>
<div class="sb" style="left:104px;top:395px;width:17px;height:17px"></div>
<div class="ad" style="left:109px;top:402px"></div>
<div style="left:36px;top:395px;width:68px;height:17px;overflow:hidden">
<div class="t" style="left:2.00px;top:2px;transform:scaleX(0.9050);">Expression</div>
</div>
<div class="sk" style="left:130px;top:393px;width:169px;height:21px;background:#FFFFFF"></div>
<div class="sb" style="left:280px;top:395px;width:17px;height:17px"></div>
<div class="ad" style="left:285px;top:402px"></div>
<div style="left:132px;top:395px;width:148px;height:17px;overflow:hidden">
<div class="t" style="left:3.00px;top:2px;transform:scaleX(0.9050);">Value</div>
</div>
<div class="sk" style="left:306px;top:393px;width:97px;height:21px;background:#FFFFFF"></div>
<div class="t" style="left:310.00px;top:397px;transform:scaleX(0.9050);">0</div>
<div class="sk" style="left:481px;top:393px;width:41px;height:22px;background:#FFFFFF"></div>
<div style="left:505px;top:395px;width:14px;height:7px;background:#ECE9D8;box-sizing:border-box;border-style:solid;border-width:1px 1px 1px 1px;border-color:#F1EFE2 #716F64 #ACA899 #F1EFE2;"></div>
<div style="left:505px;top:402px;width:14px;height:10px;background:#ECE9D8;box-sizing:border-box;border-style:solid;border-width:1px 1px 1px 1px;border-color:#FFFFFF #716F64 #716F64 #F1EFE2;box-shadow:inset 0 -1px 0 #ACA899"></div>
<div class="au" style="left:508px;top:398px"></div>
<div class="ad" style="left:508px;top:405px"></div>
<div class="t" style="left:484.00px;top:397px;transform:scaleX(0.9050);">242</div>
<div class="sk" style="left:534px;top:393px;width:41px;height:22px;background:#FFFFFF"></div>
<div style="left:558px;top:395px;width:14px;height:7px;background:#ECE9D8;box-sizing:border-box;border-style:solid;border-width:1px 1px 1px 1px;border-color:#F1EFE2 #716F64 #ACA899 #F1EFE2;"></div>
<div style="left:558px;top:402px;width:14px;height:10px;background:#ECE9D8;box-sizing:border-box;border-style:solid;border-width:1px 1px 1px 1px;border-color:#FFFFFF #716F64 #716F64 #F1EFE2;box-shadow:inset 0 -1px 0 #ACA899"></div>
<div class="au" style="left:561px;top:398px"></div>
<div class="ad" style="left:561px;top:405px"></div>
<div class="t" style="left:537.00px;top:397px;transform:scaleX(0.9050);">200</div>
<div class="sk" style="left:586px;top:397px;width:13px;height:13px;background:#FFFFFF"></div>
<div class="sk" style="left:610px;top:392px;width:49px;height:23px;background:#FFFFFF"></div>
<div class="sb" style="left:640px;top:394px;width:17px;height:19px"></div>
<div class="ad" style="left:645px;top:402px"></div>
<div style="left:666px;top:393px;width:21px;height:21px;box-sizing:border-box;border:1px solid;border-color:#ACA899 #FFFFFF #FFFFFF #ACA899;background:#fff"></div>
<div class="sk" style="left:695px;top:393px;width:67px;height:21px;background:#FFFFFF"></div>
<div class="rl" style="left:12px;top:420px">G</div>
<div class="sk" style="left:34px;top:417px;width:89px;height:21px;background:#FFFFFF"></div>
<div class="sb" style="left:104px;top:419px;width:17px;height:17px"></div>
<div class="ad" style="left:109px;top:426px"></div>
<div style="left:36px;top:419px;width:68px;height:17px;overflow:hidden">
<div class="t" style="left:2.00px;top:2px;transform:scaleX(0.9050);">Global Action</div>
</div>
<div class="sk" style="left:130px;top:417px;width:169px;height:21px;background:#FFFFFF"></div>
<div class="sb" style="left:280px;top:419px;width:17px;height:17px"></div>
<div class="ad" style="left:285px;top:426px"></div>
<div style="left:132px;top:419px;width:148px;height:17px;overflow:hidden">
<div class="t" style="left:2.00px;top:2px;transform:scaleX(0.9050);">IF( GV[1], #, Value)</div>
</div>
<div class="sk" style="left:306px;top:417px;width:97px;height:21px;background:#FFFFFF"></div>
<div class="t" style="left:310.00px;top:421px;transform:scaleX(0.9050);">0</div>
<div class="sk" style="left:481px;top:417px;width:41px;height:22px;background:#FFFFFF"></div>
<div style="left:505px;top:419px;width:14px;height:7px;background:#ECE9D8;box-sizing:border-box;border-style:solid;border-width:1px 1px 1px 1px;border-color:#F1EFE2 #716F64 #ACA899 #F1EFE2;"></div>
<div style="left:505px;top:426px;width:14px;height:10px;background:#ECE9D8;box-sizing:border-box;border-style:solid;border-width:1px 1px 1px 1px;border-color:#FFFFFF #716F64 #716F64 #F1EFE2;box-shadow:inset 0 -1px 0 #ACA899"></div>
<div class="au" style="left:508px;top:422px"></div>
<div class="ad" style="left:508px;top:429px"></div>
<div class="t" style="left:484.00px;top:421px;transform:scaleX(0.9050);">242</div>
<div class="sk" style="left:534px;top:417px;width:41px;height:22px;background:#FFFFFF"></div>
<div style="left:558px;top:419px;width:14px;height:7px;background:#ECE9D8;box-sizing:border-box;border-style:solid;border-width:1px 1px 1px 1px;border-color:#F1EFE2 #716F64 #ACA899 #F1EFE2;"></div>
<div style="left:558px;top:426px;width:14px;height:10px;background:#ECE9D8;box-sizing:border-box;border-style:solid;border-width:1px 1px 1px 1px;border-color:#FFFFFF #716F64 #716F64 #F1EFE2;box-shadow:inset 0 -1px 0 #ACA899"></div>
<div class="au" style="left:561px;top:422px"></div>
<div class="ad" style="left:561px;top:429px"></div>
<div class="t" style="left:537.00px;top:421px;transform:scaleX(0.9050);">242</div>
<div class="sk" style="left:586px;top:421px;width:13px;height:13px;background:#FFFFFF"></div>
<div class="sk" style="left:610px;top:416px;width:49px;height:23px;background:#FFFFFF"></div>
<div class="sb" style="left:640px;top:418px;width:17px;height:19px"></div>
<div class="ad" style="left:645px;top:426px"></div>
<div style="left:666px;top:417px;width:21px;height:21px;box-sizing:border-box;border:1px solid;border-color:#ACA899 #FFFFFF #FFFFFF #ACA899;background:#fff"></div>
<div class="sk" style="left:695px;top:417px;width:67px;height:21px;background:#FFFFFF"></div>
<div class="t" style="left:699.00px;top:421px;transform:scaleX(0.9050);">clear</div>
<div class="rl" style="left:12px;top:444px">H</div>
<div class="sk" style="left:34px;top:441px;width:89px;height:21px;background:#FFFFFF"></div>
<div class="sb" style="left:104px;top:443px;width:17px;height:17px"></div>
<div class="ad" style="left:109px;top:450px"></div>
<div style="left:36px;top:443px;width:68px;height:17px;overflow:hidden">
<div class="t" style="left:2.00px;top:2px;transform:scaleX(0.9050);">Global Flag</div>
</div>
<div class="sk" style="left:130px;top:441px;width:169px;height:21px;background:#FFFFFF"></div>
<div class="sb" style="left:280px;top:443px;width:17px;height:17px"></div>
<div class="ad" style="left:285px;top:450px"></div>
<div style="left:132px;top:443px;width:148px;height:17px;overflow:hidden">
<div class="t" style="left:3.00px;top:2px;transform:scaleX(0.9050);">Value &gt; #</div>
</div>
<div class="sk" style="left:306px;top:441px;width:97px;height:21px;background:#FFFFFF"></div>
<div class="t" style="left:310.00px;top:445px;transform:scaleX(0.9050);">0</div>
<div class="sk" style="left:481px;top:441px;width:41px;height:22px;background:#FFFFFF"></div>
<div style="left:505px;top:443px;width:14px;height:7px;background:#ECE9D8;box-sizing:border-box;border-style:solid;border-width:1px 1px 1px 1px;border-color:#F1EFE2 #716F64 #ACA899 #F1EFE2;"></div>
<div style="left:505px;top:450px;width:14px;height:10px;background:#ECE9D8;box-sizing:border-box;border-style:solid;border-width:1px 1px 1px 1px;border-color:#FFFFFF #716F64 #716F64 #F1EFE2;box-shadow:inset 0 -1px 0 #ACA899"></div>
<div class="au" style="left:508px;top:446px"></div>
<div class="ad" style="left:508px;top:453px"></div>
<div class="t" style="left:484.00px;top:445px;transform:scaleX(0.9050);">242</div>
<div class="sk" style="left:534px;top:441px;width:41px;height:22px;background:#FFFFFF"></div>
<div style="left:558px;top:443px;width:14px;height:7px;background:#ECE9D8;box-sizing:border-box;border-style:solid;border-width:1px 1px 1px 1px;border-color:#F1EFE2 #716F64 #ACA899 #F1EFE2;"></div>
<div style="left:558px;top:450px;width:14px;height:10px;background:#ECE9D8;box-sizing:border-box;border-style:solid;border-width:1px 1px 1px 1px;border-color:#FFFFFF #716F64 #716F64 #F1EFE2;box-shadow:inset 0 -1px 0 #ACA899"></div>
<div class="au" style="left:561px;top:446px"></div>
<div class="ad" style="left:561px;top:453px"></div>
<div class="t" style="left:537.00px;top:445px;transform:scaleX(0.9050);">2</div>
<div class="sk" style="left:586px;top:445px;width:13px;height:13px;background:#FFFFFF"></div>
<div class="sk" style="left:610px;top:440px;width:49px;height:23px;background:#FFFFFF"></div>
<div class="sb" style="left:640px;top:442px;width:17px;height:19px"></div>
<div class="ad" style="left:645px;top:450px"></div>
<div class="mono" style="left:615px;top:446px;letter-spacing:1px">ZON</div>
<div style="left:666px;top:441px;width:21px;height:21px;box-sizing:border-box;border:1px solid;border-color:#ACA899 #FFFFFF #FFFFFF #ACA899;background:#D6FCD6"></div>
<div class="sk" style="left:695px;top:441px;width:67px;height:21px;background:#FFFFFF"></div>
<div class="t" style="left:698.00px;top:445px;transform:scaleX(0.9050);">pending</div>
<div class="rl" style="left:12px;top:468px">I</div>
<div class="sk" style="left:34px;top:465px;width:89px;height:21px;background:#FFFFFF"></div>
<div class="sb" style="left:104px;top:467px;width:17px;height:17px"></div>
<div class="ad" style="left:109px;top:474px"></div>
<div style="left:36px;top:467px;width:68px;height:17px;overflow:hidden">
<div class="t" style="left:2.00px;top:2px;transform:scaleX(0.9050);">Do Next&nbsp; IF</div>
</div>
<div class="sk" style="left:130px;top:465px;width:169px;height:21px;background:#FFFFFF"></div>
<div class="sb" style="left:280px;top:467px;width:17px;height:17px"></div>
<div class="ad" style="left:285px;top:474px"></div>
<div style="left:132px;top:467px;width:148px;height:17px;overflow:hidden">
<div class="t" style="left:2.00px;top:2px;transform:scaleX(0.9050);">Flag</div>
</div>
<div class="sk" style="left:306px;top:465px;width:97px;height:21px;background:#FFFFFF"></div>
<div class="t" style="left:310.00px;top:469px;transform:scaleX(0.9050);">0</div>
<div class="sk" style="left:481px;top:465px;width:41px;height:22px;background:#FFFFFF"></div>
<div style="left:505px;top:467px;width:14px;height:7px;background:#ECE9D8;box-sizing:border-box;border-style:solid;border-width:1px 1px 1px 1px;border-color:#F1EFE2 #716F64 #ACA899 #F1EFE2;"></div>
<div style="left:505px;top:474px;width:14px;height:10px;background:#ECE9D8;box-sizing:border-box;border-style:solid;border-width:1px 1px 1px 1px;border-color:#FFFFFF #716F64 #716F64 #F1EFE2;box-shadow:inset 0 -1px 0 #ACA899"></div>
<div class="au" style="left:508px;top:470px"></div>
<div class="ad" style="left:508px;top:477px"></div>
<div class="t" style="left:484.00px;top:469px;transform:scaleX(0.9050);">2</div>
<div class="sk" style="left:534px;top:465px;width:41px;height:22px;background:#FFFFFF"></div>
<div style="left:558px;top:467px;width:14px;height:7px;background:#ECE9D8;box-sizing:border-box;border-style:solid;border-width:1px 1px 1px 1px;border-color:#F1EFE2 #716F64 #ACA899 #F1EFE2;"></div>
<div style="left:558px;top:474px;width:14px;height:10px;background:#ECE9D8;box-sizing:border-box;border-style:solid;border-width:1px 1px 1px 1px;border-color:#FFFFFF #716F64 #716F64 #F1EFE2;box-shadow:inset 0 -1px 0 #ACA899"></div>
<div class="au" style="left:561px;top:470px"></div>
<div class="ad" style="left:561px;top:477px"></div>
<div class="t" style="left:538.00px;top:469px;transform:scaleX(0.9050);">0</div>
<div class="sk" style="left:586px;top:469px;width:13px;height:13px;background:#FFFFFF"></div>
<div class="sk" style="left:610px;top:464px;width:49px;height:23px;background:#FFFFFF"></div>
<div class="sb" style="left:640px;top:466px;width:17px;height:19px"></div>
<div class="ad" style="left:645px;top:474px"></div>
<div style="left:666px;top:465px;width:21px;height:21px;box-sizing:border-box;border:1px solid;border-color:#ACA899 #FFFFFF #FFFFFF #ACA899;background:#fff"></div>
<div class="sk" style="left:695px;top:465px;width:67px;height:21px;background:#FFFFFF"></div>
<div class="rl" style="left:12px;top:492px">J</div>
<div class="sk" style="left:34px;top:489px;width:89px;height:21px;background:#FFFFFF"></div>
<div class="sb" style="left:104px;top:491px;width:17px;height:17px"></div>
<div class="ad" style="left:109px;top:498px"></div>
<div style="left:36px;top:491px;width:68px;height:17px;overflow:hidden">
<div class="t" style="left:2.00px;top:2px;transform:scaleX(0.9050);">Expression</div>
</div>
<div class="sk" style="left:130px;top:489px;width:169px;height:21px;background:#FFFFFF"></div>
<div class="sb" style="left:280px;top:491px;width:17px;height:17px"></div>
<div class="ad" style="left:285px;top:498px"></div>
<div style="left:132px;top:491px;width:148px;height:17px;overflow:hidden">
<div class="t" style="left:3.00px;top:2px;transform:scaleX(0.9050);">Value</div>
</div>
<div class="sk" style="left:306px;top:489px;width:97px;height:21px;background:#FFFFFF"></div>
<div class="t" style="left:309.00px;top:493px;transform:scaleX(0.9050);">[242]</div>
<div class="sk" style="left:481px;top:489px;width:41px;height:22px;background:#FFFFFF"></div>
<div style="left:505px;top:491px;width:14px;height:7px;background:#ECE9D8;box-sizing:border-box;border-style:solid;border-width:1px 1px 1px 1px;border-color:#F1EFE2 #716F64 #ACA899 #F1EFE2;"></div>
<div style="left:505px;top:498px;width:14px;height:10px;background:#ECE9D8;box-sizing:border-box;border-style:solid;border-width:1px 1px 1px 1px;border-color:#FFFFFF #716F64 #716F64 #F1EFE2;box-shadow:inset 0 -1px 0 #ACA899"></div>
<div class="au" style="left:508px;top:494px"></div>
<div class="ad" style="left:508px;top:501px"></div>
<div class="t" style="left:484.00px;top:493px;transform:scaleX(0.9050);">242</div>
<div class="sk" style="left:534px;top:489px;width:41px;height:22px;background:#FFFFFF"></div>
<div style="left:558px;top:491px;width:14px;height:7px;background:#ECE9D8;box-sizing:border-box;border-style:solid;border-width:1px 1px 1px 1px;border-color:#F1EFE2 #716F64 #ACA899 #F1EFE2;"></div>
<div style="left:558px;top:498px;width:14px;height:10px;background:#ECE9D8;box-sizing:border-box;border-style:solid;border-width:1px 1px 1px 1px;border-color:#FFFFFF #716F64 #716F64 #F1EFE2;box-shadow:inset 0 -1px 0 #ACA899"></div>
<div class="au" style="left:561px;top:494px"></div>
<div class="ad" style="left:561px;top:501px"></div>
<div class="t" style="left:538.00px;top:493px;transform:scaleX(0.9050);">0</div>
<div class="sk" style="left:586px;top:493px;width:13px;height:13px;background:#FFFFFF"></div>
<svg style="position:absolute;left:586px;top:493px" width="13" height="13"><path d="M3 5h1v1h1v1h1v-1h1v-1h1v-1h1v-1h1v3h-1v1h-1v1h-1v1h-1v1h-1v-1h-1v-1h-1v-1h-1z" fill="#000"/></svg>
<div class="sk" style="left:610px;top:488px;width:49px;height:23px;background:#FFFFFF"></div>
<div class="sb" style="left:640px;top:490px;width:17px;height:19px"></div>
<div class="ad" style="left:645px;top:498px"></div>
<svg style="position:absolute;left:616px;top:495px" width="22" height="10" shape-rendering="crispEdges"><path d="M1 0h10v6h10v2h-12v-6h-9v-1h1z" fill="#000"/></svg>
<div style="left:666px;top:489px;width:21px;height:21px;box-sizing:border-box;border:1px solid;border-color:#ACA899 #FFFFFF #FFFFFF #ACA899;background:#FF00FF"></div>
<div class="sk" style="left:695px;top:489px;width:67px;height:21px;background:#FFFFFF"></div>
</body></html>
